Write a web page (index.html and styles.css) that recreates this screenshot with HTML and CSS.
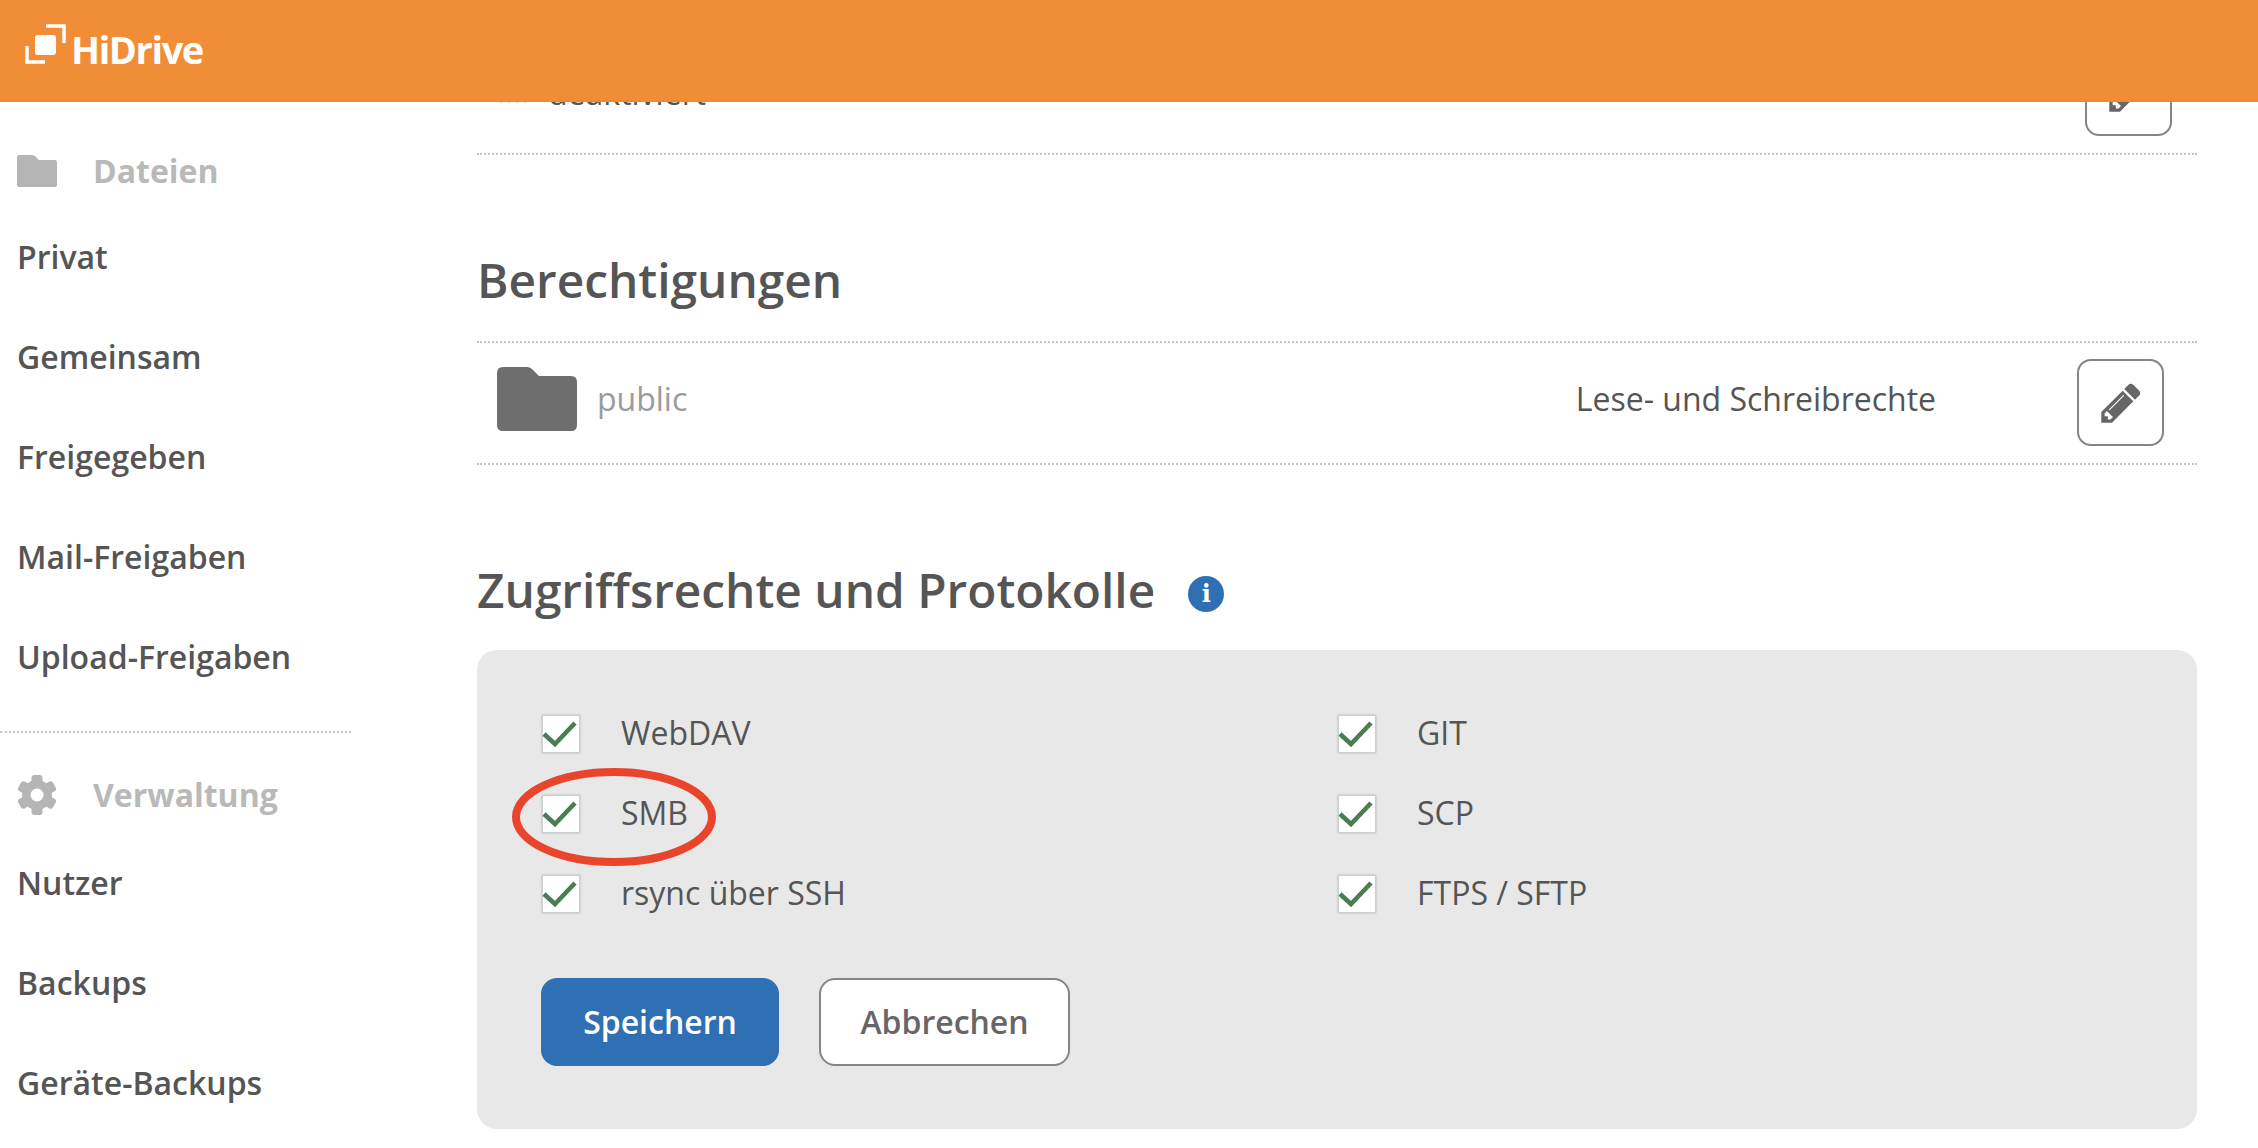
FILE: index.html
```html
<!DOCTYPE html>
<html lang="de">
<head>
    <meta charset="UTF-8">
    <meta name="viewport" content="width=device-width, initial-scale=1.0">
    <title>HiDrive</title>
    <link rel="stylesheet" href="styles.css">
</head>
<body>
    <header class="topbar">
        <svg class="logo-mark" viewBox="0 0 44 44" width="44" height="44">
            <path d="M23 4H41V21" fill="none" stroke="#fff" stroke-width="3.5"/>
            <path d="M4 24V40H22" fill="none" stroke="#fff" stroke-width="3.5"/>
            <rect x="12" y="13" width="21" height="20" rx="3" fill="#fff"/>
        </svg>
        <span class="logo-text">HiDrive</span>
    </header>

    <div class="layout">
        <nav class="sidebar">
            <div class="nav-heading">
                <svg class="nav-icon" viewBox="0 0 40 32" width="40" height="32">
                    <path d="M2 0H15Q17 0 18.500 1.500L22 5H38Q40 5 40 7V30Q40 32 38 32H2Q0 32 0 30V2Q0 0 2 0Z" fill="#b5b5b5"/>
                </svg>
                <span>Dateien</span>
            </div>
            <a class="nav-item">Privat</a>
            <a class="nav-item">Gemeinsam</a>
            <a class="nav-item">Freigegeben</a>
            <a class="nav-item">Mail-Freigaben</a>
            <a class="nav-item">Upload-Freigaben</a>

            <div class="nav-divider"></div>

            <div class="nav-heading">
                <svg class="nav-icon" viewBox="0 0 40 40" width="40" height="40">
                    <g fill="#b5b5b5">
                        <rect x="14.500" y="0" width="11" height="40" rx="3"/>
                        <rect x="14.500" y="0" width="11" height="40" rx="3" transform="rotate(60 20 20)"/>
                        <rect x="14.500" y="0" width="11" height="40" rx="3" transform="rotate(120 20 20)"/>
                        <circle cx="20" cy="20" r="15"/>
                    </g>
                    <circle cx="20" cy="20" r="6.500" fill="#fff"/>
                </svg>
                <span>Verwaltung</span>
            </div>
            <a class="nav-item">Nutzer</a>
            <a class="nav-item">Backups</a>
            <a class="nav-item">Geräte-Backups</a>
        </nav>

        <main class="content">
            <div class="row row-cut">
                <div class="row-name row-name-cut">
                    <svg class="cut-icon" viewBox="0 0 30 20" width="30" height="20">
                        <path d="M3 3L13 17M13 3L3 17M19 3L29 17M29 3L19 17" stroke="#999" stroke-width="3"/>
                    </svg>
                    <span class="cut-text">deaktiviert</span>
                </div>
                <button class="icon-btn icon-btn-cut" type="button">
                    <svg viewBox="0 0 1792 1792" width="46" height="46"><path d="M491 1536l91-91-235-235-91 91v107h128v128h107zm523-928q0-22-22-22-10 0-17 7l-542 542q-7 7-7 17 0 22 22 22 10 0 17-7l542-542q7-7 7-17zm-54-192l416 416-832 832h-416v-416zm683 96q0 53-37 90l-166 166-416-416 166-165q36-38 90-38 53 0 91 38l235 234q37 39 37 91z" fill="#666"/></svg>
                </button>
            </div>

            <h2 class="section-title title-perm">Berechtigungen</h2>
            <div class="row row-folder">
                <div class="row-name">
                    <svg class="folder-icon" viewBox="0 0 80 64" width="80" height="64">
                        <path d="M6 0H30Q33 0 35 2L42 9H74Q80 9 80 15V58Q80 64 74 64H6Q0 64 0 58V6Q0 0 6 0Z" fill="#6e6e6e"/>
                    </svg>
                    <span class="folder-name">public</span>
                </div>
                <span class="row-rights">Lese- und Schreibrechte</span>
                <button class="icon-btn icon-btn-folder" type="button">
                    <svg viewBox="0 0 1792 1792" width="46" height="46"><path d="M491 1536l91-91-235-235-91 91v107h128v128h107zm523-928q0-22-22-22-10 0-17 7l-542 542q-7 7-7 17 0 22 22 22 10 0 17-7l542-542q7-7 7-17zm-54-192l416 416-832 832h-416v-416zm683 96q0 53-37 90l-166 166-416-416 166-165q36-38 90-38 53 0 91 38l235 234q37 39 37 91z" fill="#666"/></svg>
                </button>
            </div>

            <h2 class="section-title title-access">
                Zugriffsrechte und Protokolle
                <span class="info-badge">i</span>
            </h2>

            <form class="panel">
                <svg class="circle-mark" viewBox="0 0 204 98" width="204" height="98">
                    <ellipse cx="102" cy="49" rx="98" ry="45" fill="none" stroke="#e8452c" stroke-width="8"/>
                </svg>
                <div class="option-grid">
                    <label class="option"><span class="checkbox"><svg viewBox="0 0 38 38" width="38" height="38"><path d="M2 19L13 29L33 8" fill="none" stroke="#4a7d4f" stroke-width="4.500"/></svg></span>WebDAV</label>
                    <label class="option"><span class="checkbox"><svg viewBox="0 0 38 38" width="38" height="38"><path d="M2 19L13 29L33 8" fill="none" stroke="#4a7d4f" stroke-width="4.500"/></svg></span>GIT</label>
                    <label class="option"><span class="checkbox"><svg viewBox="0 0 38 38" width="38" height="38"><path d="M2 19L13 29L33 8" fill="none" stroke="#4a7d4f" stroke-width="4.500"/></svg></span>SMB</label>
                    <label class="option"><span class="checkbox"><svg viewBox="0 0 38 38" width="38" height="38"><path d="M2 19L13 29L33 8" fill="none" stroke="#4a7d4f" stroke-width="4.500"/></svg></span>SCP</label>
                    <label class="option"><span class="checkbox"><svg viewBox="0 0 38 38" width="38" height="38"><path d="M2 19L13 29L33 8" fill="none" stroke="#4a7d4f" stroke-width="4.500"/></svg></span>rsync über SSH</label>
                    <label class="option"><span class="checkbox"><svg viewBox="0 0 38 38" width="38" height="38"><path d="M2 19L13 29L33 8" fill="none" stroke="#4a7d4f" stroke-width="4.500"/></svg></span>FTPS / SFTP</label>
                </div>
                <div class="panel-buttons">
                    <button class="btn btn-primary" type="button">Speichern</button>
                    <button class="btn btn-secondary" type="button">Abbrechen</button>
                </div>
            </form>
        </main>
    </div>
</body>
</html>
```

FILE: styles.css
```css
* {
    box-sizing: border-box;
}

html, body {
    height: 100%;
}

body {
    margin: 0;
    overflow: hidden;
    font-family: "Open Sans", "Liberation Sans", sans-serif;
    color: #555;
    background-color: #fff;
}

.topbar {
    position: relative;
    z-index: 2;
    display: flex;
    align-items: center;
    height: 102px;
    padding: 0 0 2px 23px;
    background-color: #f28d37;
    border-bottom: 2px solid #ee8a36;
}

.logo-mark {
    margin-bottom: 10px;
}

.logo-text {
    margin-left: 4px;
    font-size: 38px;
    font-weight: 700;
    letter-spacing: -1.4px;
    color: #fff;
}

.layout {
    display: flex;
}

.sidebar {
    flex: none;
    width: 351px;
    padding-top: 33px;
}

.nav-heading {
    display: flex;
    align-items: center;
    height: 71px;
    padding-left: 17px;
    font-size: 32px;
    font-weight: 700;
    color: #b9b9b9;
}

.nav-icon {
    flex: none;
    margin-right: 36px;
}

.nav-item {
    display: flex;
    align-items: center;
    height: 100px;
    padding-left: 17px;
    font-size: 32px;
    font-weight: 600;
    color: #555;
}

.nav-divider {
    margin: 25px 0 26px;
    border-top: 2px dotted #c4c4c4;
}

.nav-divider + .nav-heading {
    margin-bottom: 2px;
}

.content {
    flex: none;
    width: 1720px;
    margin-left: 126px;
}

.row {
    display: flex;
    align-items: center;
    border-bottom: 2px dotted #c4c4c4;
}

.row-cut {
    justify-content: space-between;
    height: 88px;
    margin-top: -35px;
    padding: 0 25px 0 20px;
}

.row-name {
    display: flex;
    align-items: center;
}

.row-name-cut {
    margin-top: -36px;
}

.cut-icon {
    margin: 6px 21px 0 0;
}

.cut-text {
    font-size: 32px;
    color: #555;
}

.section-title {
    margin: 0;
    font-size: 47.800px;
    font-weight: 600;
    color: #555;
}

.title-perm {
    height: 186px;
    padding-top: 93px;
    line-height: 64px;
}

.row-folder {
    height: 124px;
    padding: 0 33px 8px 20px;
    border-top: 2px dotted #c4c4c4;
}

.folder-icon {
    margin-right: 20px;
}

.folder-name {
    margin-bottom: 2px;
    font-size: 32px;
    color: #9b9b9b;
}

.row-rights {
    margin: 0 141px 2px auto;
    font-size: 32px;
    color: #555;
}

.icon-btn {
    display: flex;
    align-items: center;
    justify-content: center;
    width: 87px;
    height: 87px;
    padding: 0;
    background-color: #fff;
    border: 2px solid #858585;
    border-radius: 14px;
}

.icon-btn-cut {
    margin-top: -36px;
}

.icon-btn-folder {
    margin-top: 7px;
}

.title-access {
    display: flex;
    align-items: center;
    height: 185px;
    padding-top: 64px;
}

.info-badge {
    display: flex;
    align-items: center;
    justify-content: center;
    width: 36px;
    height: 36px;
    margin: 8px 0 0 33px;
    border-radius: 50%;
    background-color: #2f6fb3;
    font-family: "DejaVu Serif", serif;
    font-size: 24px;
    font-weight: 700;
    color: #fff;
}

.panel {
    position: relative;
    height: 479px;
    padding: 65px 65px 0;
    background-color: #e8e8e8;
    border-radius: 20px;
}

.circle-mark {
    position: absolute;
    left: 35px;
    top: 118px;
}

.option-grid {
    display: grid;
    grid-template-columns: 796px 1fr;
    grid-auto-rows: 80px;
}

.option {
    display: flex;
    align-items: center;
    height: 38px;
    padding-bottom: 4px;
    font-size: 32px;
    color: #555;
}

.checkbox {
    flex: none;
    align-self: flex-start;
    width: 38px;
    height: 38px;
    margin-right: 41px;
    background-color: #fff;
    border: 1px solid #cfcfcf;
    box-shadow: 0 0 2px rgba(0,0,0,0.25);
}

.checkbox svg {
    display: block;
    margin: -1px;
}

.panel-buttons {
    display: flex;
    gap: 40px;
    margin: 23px 0 0 -1px;
}

.btn {
    height: 88px;
    padding-bottom: 3px;
    font-family: inherit;
    font-size: 32px;
    font-weight: 600;
    border-radius: 16px;
}

.btn-primary {
    width: 238px;
    color: #fff;
    background-color: #2f6fb3;
    border: none;
}

.btn-secondary {
    width: 251px;
    color: #666;
    background-color: #fff;
    border: 2px solid #858585;
}
```
